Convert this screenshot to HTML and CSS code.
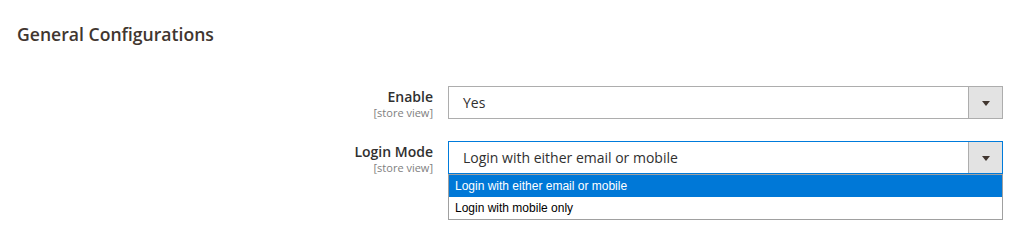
FILE: index.html
```html
<!DOCTYPE html>
<html lang="en">
<head>
  <meta charset="UTF-8" />
  <title>General Configurations</title>
  <link rel="stylesheet" href="styles.css">
</head>
<body>

<div class="section">
  <h2 class="section-title">General Configurations</h2>

  <div class="field">
    <div class="label">
      <span class="label-text">Enable</span>
      <span class="scope">[store view]</span>
    </div>
    <div class="control">
      <div class="select">
        <span class="select-value">Yes</span>
        <span class="select-arrow"></span>
      </div>
    </div>
  </div>

  <div class="field">
    <div class="label">
      <span class="label-text">Login Mode</span>
      <span class="scope">[store view]</span>
    </div>
    <div class="control">
      <div class="select is-open">
        <span class="select-value">Login with either email or mobile</span>
        <span class="select-arrow"></span>
      </div>
      <!-- native dropdown popup -->
      <ul class="options">
        <li class="option selected">Login with either email or mobile</li>
        <li class="option">Login with mobile only</li>
      </ul>
    </div>
  </div>
</div>

</body>
</html>
```

FILE: styles.css
```css
:root {
  --text: #303030;
  --border: #adadad;
  --focus: #007bdb;
  --arrow-bg: #e3e3e3;
}

html, body {
  margin: 0;
  padding: 0;
  min-height: 245px;
  background: #fff;
  font-family: 'Open Sans', sans-serif;
  color: var(--text);
}

.section {
  padding: 23px 0 60px 17px;
}

.section-title {
  margin: 0 0 41px;
  font-size: 17.6px;
  line-height: 22px;
  font-weight: 600;
  color: #41362f;
}

.field {
  display: grid;
  grid-template-columns: 416px 555px;
  column-gap: 15px;
  align-items: start;
  margin-bottom: 22px;
}

.label {
  display: flex;
  flex-direction: column;
  align-items: flex-end;
  height: 33px;
  padding-top: 1px;
  box-sizing: border-box;
}

.label-text {
  font-size: 14px;
  font-weight: 600;
  line-height: 19px;
}

.scope {
  font-size: 11px;
  line-height: 13px;
  color: #808080;
}

.control {
  position: relative;
}

.select {
  display: flex;
  height: 33px;
  box-sizing: border-box;
  border: 1px solid var(--border);
  background: #fff;
}

.select.is-open {
  border-color: var(--focus);
}

.select-value {
  flex: 1;
  padding-left: 14px;
  font-size: 14px;
  line-height: 31px;
  color: var(--text);
}

.select-arrow {
  width: 33px;
  border-left: 1px solid var(--border);
  background: var(--arrow-bg);
  position: relative;
}

.select-arrow::after {
  content: '';
  position: absolute;
  left: 13px;
  top: 14px;
  border-left: 4px solid transparent;
  border-right: 4px solid transparent;
  border-top: 5px solid #41362f;
}

.options {
  position: absolute;
  left: 0;
  top: 33px;
  z-index: 10;
  width: 555px;
  box-sizing: border-box;
  margin: 0;
  padding: 0;
  list-style: none;
  border: 1px solid #a0a0a0;
  background: #fff;
  font-family: 'Liberation Sans', sans-serif;
  font-size: 12px;
}

.option {
  height: 22px;
  line-height: 22px;
  padding-left: 6px;
  color: #000;
}

.option.selected {
  background: #0078d7;
  color: #fff;
}
```
